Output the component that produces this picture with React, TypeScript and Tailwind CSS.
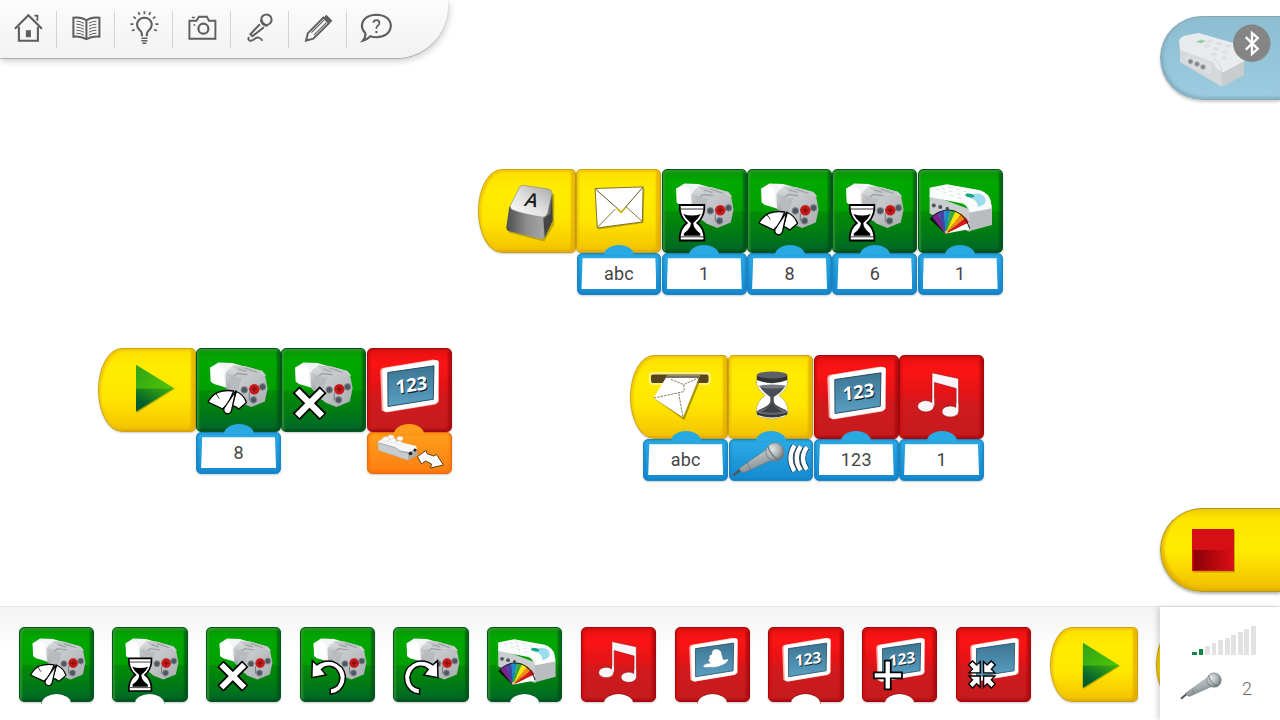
import React from "react";

type Tone = "green" | "red" | "yellow";

const TONES: Record<Tone, string> = {
  green:
    "bg-[linear-gradient(180deg,#0a9508_0%,#00a800_14%,#00a000_50%,#008d06_51%,#007d12_75%,#00652a_100%)] border-[#00581f] shadow-[inset_2px_2px_2px_rgba(60,150,50,.75),inset_-3px_-2px_2px_rgba(0,70,25,.6),0_1px_2px_rgba(0,0,0,.2)]",
  red: "bg-[linear-gradient(180deg,#e81010_0%,#fb1414_18%,#e51316_45%,#d01a1d_58%,#c51b1e_100%)] border-[#a3090c] shadow-[inset_2px_2px_2px_rgba(205,15,15,.9),inset_-3px_-2px_2px_rgba(165,10,14,.75),0_1px_2px_rgba(0,0,0,.2)]",
  yellow:
    "bg-[linear-gradient(180deg,#fde000_0%,#ffec00_25%,#ffe600_60%,#f7cd00_88%,#f0bf00_100%)] border-[#c9a312] shadow-[inset_2px_2px_2px_rgba(240,190,0,.7),inset_-4px_-2px_2px_rgba(225,165,0,.7),0_1px_2px_rgba(0,0,0,.2)]",
};

/* ---------- artwork, drawn in block units (85 x 85) ---------- */

const Defs = () => (
  <svg width="0" height="0" className="absolute">
    <defs>
      <linearGradient id="steel" x1="0" y1="0" x2="0" y2="1">
        <stop offset="0" stopColor="#dcdee0" />
        <stop offset="1" stopColor="#a3a6aa" />
      </linearGradient>
      <linearGradient id="face" x1="0" y1="0" x2="1" y2="1">
        <stop offset="0" stopColor="#cfd1d3" />
        <stop offset="1" stopColor="#a9acb0" />
      </linearGradient>
      <linearGradient id="keySide" x1="0" y1="0" x2="1" y2="0">
        <stop offset="0" stopColor="#4c4c4c" />
        <stop offset=".45" stopColor="#8e8e8e" />
        <stop offset=".8" stopColor="#a4a4a4" />
        <stop offset="1" stopColor="#555" />
      </linearGradient>
      <linearGradient id="keyTop" x1="0" y1="1" x2="1" y2="0">
        <stop offset="0" stopColor="#fff" />
        <stop offset=".5" stopColor="#dedede" />
        <stop offset="1" stopColor="#a5a5a5" />
      </linearGradient>
      <linearGradient id="playTop" x1="0" y1="0" x2="1" y2="1">
        <stop offset="0" stopColor="#2da317" />
        <stop offset="1" stopColor="#5ed000" />
      </linearGradient>
      <linearGradient id="playLow" x1="0" y1="1" x2=".8" y2="0">
        <stop offset="0" stopColor="#00512c" />
        <stop offset=".35" stopColor="#04652c" />
        <stop offset="1" stopColor="#38a810" />
      </linearGradient>
      <linearGradient id="glass" x1="0" y1="0" x2="0" y2="1">
        <stop offset="0" stopColor="#3c7592" />
        <stop offset="1" stopColor="#5a9fc2" />
      </linearGradient>
      <linearGradient id="stopLow" x1="0" y1="0" x2="1" y2="0">
        <stop offset="0" stopColor="#8a0008" />
        <stop offset="1" stopColor="#d90f13" />
      </linearGradient>
      <radialGradient id="ball" cx=".35" cy=".35" r=".75">
        <stop offset="0" stopColor="#e4e8ea" />
        <stop offset=".55" stopColor="#a9afb2" />
        <stop offset="1" stopColor="#5d6468" />
      </radialGradient>
      <linearGradient id="handle" x1="0" y1="0" x2=".5" y2="1">
        <stop offset="0" stopColor="#dfe3e5" />
        <stop offset="1" stopColor="#7d868b" />
      </linearGradient>
    </defs>
  </svg>
);

const Motor = () => (
  <g>
    <path d="M14 19 L22 14 L36 14.5 L48 18 L42 43 L18 35.5 L14.5 33Z" fill="#f3f4f5" />
    <path d="M14 19 L22 16.5 L27 20 L28 37 L18 35.5 L14.5 33Z" fill="#fff" />
    <path d="M30 24 L33 20 M32 26 L35 21.500" stroke="#d3d5d8" strokeWidth="1" />
    <path d="M29 25 L36 17 L48 17.5 L66 22.5 L70 27 L45 33 L34 44 L30 40Z" fill="url(#steel)" />
    <path d="M36 17 L48 17.500 L66 22.500 L63 25 L43 24Z" fill="#c5c8cb" />
    <path d="M42 20.500 L50 23 M48 19.500 L56 22 M54 21.500 L61 24 M37 28 L41 25 L58 27" stroke="#9da0a4" strokeWidth="1.300" fill="none" />
    <path d="M29 25 Q36 28 34 44 L41 52 L46 30Z" fill="#b9bcbf" />
    <path d="M45 31 L52 25.5 L64 25 L69 28 L71.3 40 L68.5 53 L55 58.5 L44 54 L39.7 50Z" fill="url(#face)" />
    <path d="M53 44 V52" stroke="#6d7074" strokeWidth=".9" />
    <g fill="#4d5862" stroke="#8b8e92" strokeWidth="1">
      <circle cx="48" cy="41.4" r="3.3" />
      <circle cx="66.3" cy="38.4" r="3.3" />
      <circle cx="57.3" cy="51.4" r="3.3" />
    </g>
    <circle cx="58" cy="40.7" r="5.200" fill="#c91a1a" />
    <path d="M58 38 V43.400 M55.300 40.700 H60.700" stroke="#8f1012" strokeWidth="1.800" />
  </g>
);

const Glass = () => (
  <g>
    <path
      d="M17.500 35.500 H42 V40 Q41 48 35 53.500 Q41 58 42 66.500 V71 H17.500 V66.500 Q18.500 58 24.500 53.500 Q18.500 48 17.500 40Z"
      fill="#fff" stroke="#000" strokeWidth="1.8"
    />
    <path d="M21 44.500 Q30 47.500 38.500 44.500 Q36 49.500 31 53.500 Q31 59 38 64 V66.300 H21.500 V64 Q28.500 59 28.700 53.500 Q23.500 49.500 21 44.500Z" fill="#000" />
    <path d="M18 39.500 H41.500 M18 67.300 H41.500" stroke="#000" strokeWidth=".8" />
  </g>
);

const Gauge = () => (
  <g stroke="#000" strokeWidth="1.300" strokeLinejoin="round" fill="#fff">
    <path d="M11.700 53.500 Q16 46 21.500 43.800 Q29 41 37.500 42.500 L31 56.500 Q27.500 58 26.500 60.500 Z" />
    <path d="M40 43 Q47.500 46 50.200 54 L42.500 60.500 Q39 57.500 35.800 57Z" />
    <path d="M39.500 42.500 L35.700 60 Q35 65 31.500 65.300 Q27 65 27.500 60Z" />
    <path d="M19.500 44.800 L23 50" strokeWidth=".8" />
  </g>
);

const Cross = () => (
  <g fill="none" strokeLinecap="butt">
    <path d="M14.800 41.300 L41.800 68.300 M41.800 41.300 L14.800 68.300" stroke="#000" strokeWidth="9.800" />
    <path d="M15.900 42.400 L40.700 67.200 M40.700 42.400 L15.900 67.200" stroke="#fff" strokeWidth="6.200" />
  </g>
);

const TurnArrow = ({ flip }: { flip?: boolean }) => (
  <g transform={flip ? "translate(60 0) scale(-1 1)" : undefined}>
    <path
      d="M12.500 38 L17.500 42.500 Q26 36.500 35 39 Q47 43 48.500 55 Q48.500 68 38 73 L32 74.500 V68.500 Q42 67 42.500 56.500 Q41 45.500 32 44 Q26.500 43.500 22.500 47.500 L27.500 53.500 L12 56.500Z"
      fill="#fff" stroke="#000" strokeWidth="1.600" strokeLinejoin="miter"
    />
  </g>
);

const Sensor = () => (
  <g>
    <path d="M11.300 25 L52 40 V62 L49.700 61.700 L11.300 44Z" fill="#cbced0" />
    <path d="M51 40 L73.700 35 V55.500 L50.500 61.700Z" fill="#babdc0" />
    <path d="M11.300 18.300 L28.700 14.700 L62 20.700 Q71 24 72.700 32 L73 39 L51.500 43 Q49 36 44 34 L11.300 27.500Z" fill="#fbfcfc" />
    <path d="M43 32 Q50 35 51.500 43" stroke="#dfe2e4" fill="none" />
    <path d="M51 28 Q54 23.500 60 24 Q66.500 25 67.500 31 Q67 36 59.500 37.500 Q60 31 51 28Z" fill="#9cdcef" />
    <ellipse cx="51.500" cy="26" rx="4.500" ry="1.900" fill="#14a583" transform="rotate(10 51.500 26)" />
    <g fill="none" stroke="#dadddf" strokeWidth="1.100">
      <path d="M18 19.500 l3 1 M24 18.500 l3 1 M30 17.500 l3 1 M25 22.500 l3 1 M31 21.500 l3 1 M38 19.500 l3 1 M32 25.500 l3 1 M39 24 l3 1 M45 21.500 l3 1 M40 28 l3 1" />
    </g>
    <g fill="#4c5359"><circle cx="15.500" cy="36" r="2" /><circle cx="22" cy="37.500" r="2" /><circle cx="29" cy="39" r="1.700" /></g>
    <g>
      <path d="M27 64.500 L11.500 49.500 L16 45.500Z" fill="#111" />
      <path d="M27 64.500 L13.500 47 L20 42.500Z" fill="#7a2590" />
      <path d="M27 64.500 L20 42.500 L26 40.800Z" fill="#3e46a8" />
      <path d="M27 64.500 L26 40.800 L32 40.500Z" fill="#1889c9" />
      <path d="M27 64.500 L32 40.500 L37.500 41.500Z" fill="#39ab3c" />
      <path d="M27 64.500 L37.500 41.500 L43 44Z" fill="#ffe500" />
      <path d="M27 64.500 L43 44 L47.500 48Z" fill="#f08a12" />
      <path d="M27 64.500 L47.500 48 L50.700 53Z" fill="#da1717" />
      <path d="M27 64.500 L50.700 53 L51.500 59.500 L28 64Z" fill="#fff" />
      <path d="M11.500 49.500 Q18 42 28 40.500 Q45 40 51.500 59" fill="none" stroke="#222" strokeWidth="1.100" />
      <circle cx="28" cy="62.500" r="1.600" fill="#f4b27c" />
    </g>
  </g>
);

const Screen = ({ kind }: { kind: "123" | "hat" | "blank" }) => (
  <g>
    <path d="M13 23 Q13 20 16 19.300 L66 11 L71 13 L71.500 53 L68 56 L19 64 L14.500 62Z" fill="#ffb4b0" />
    <path d="M15 23 Q15 20.300 18 19.600 L68 11.500 Q71.500 11.200 71.500 14 L70.700 52 Q70.700 54.600 68 55.200 L20 63.300 Q16.300 63.500 16.200 60.500Z" fill="#fff" />
    <path d="M20.500 24 L66.700 17.300 L66 50.800 L20.700 58Z" fill="url(#glass)" stroke="#1c445b" strokeWidth=".9" />
    {kind === "123" && (
      <g transform="translate(44.500 43) rotate(-3) skewY(-5)" fontFamily="'Open Sans', 'Liberation Sans', sans-serif" fontWeight="700" fontSize="18.500" textAnchor="middle">
        <text x="1" y="1.400" fill="#12242f">123</text>
        <text fill="#fff">123</text>
      </g>
    )}
    {kind === "hat" && (
      <path d="M29.500 45.500 Q31 42 38.500 41.500 Q34 38.500 37.500 35.500 Q36 31.500 40 31 Q40 24.500 46 24.500 Q52 25 52.500 31.500 L54 37 Q58 37.500 60.500 35.500 Q60 41.500 52 44.500 Q46 47.500 39 46.500 Q31.500 48 29.500 45.500Z" fill="#fff" stroke="#2b5c76" strokeWidth=".5" />
    )}
  </g>
);

/* Palette versions of the screen blocks use a smaller screen. */
const SmallScreen = ({ kind }: { kind: "123" | "hat" | "blank" }) => (
  <g transform="translate(2.900 3.300) scale(.9)"><Screen kind={kind} /></g>
);

const Plus = () => (
  <path d="M23.800 38 h6.600 v12.800 h12.200 v6.400 h-12.200 v12 h-6.600 v-12 h-11.800 v-6.400 h11.800z" fill="#fff" stroke="#000" strokeWidth="1.900" />
);

const Shrink = () => (
  <g fill="#fff" stroke="#000" strokeWidth="1.500">
    {["", "translate(54.600 0) scale(-1 1)", "translate(0 106) scale(1 -1)", "translate(54.600 106) scale(-1 -1)"].map((t) => (
      <path key={t} transform={t || undefined} d="M12.800 42.500 L17.200 38.300 L21.600 42.800 L25.500 39 V51.300 H13.200 L17 47.200Z" />
    ))}
  </g>
);

const Music = () => (
  <g fill="#fbf4f8" stroke="#8d0d10" strokeWidth=".6">
    <path d="M32.700 17.300 L59.300 23 V56 H56.800 V33 L35.200 27 V51 H32.700Z" />
    <ellipse cx="26.500" cy="50.800" rx="8.200" ry="5.700" />
    <ellipse cx="51" cy="56" rx="8.400" ry="5.600" />
    <path d="M32.900 49 V44 H35 V50Z M57 55 V48 H59 V56Z" stroke="none" />
  </g>
);

const Play = () => (
  <g>
    <path d="M38.500 17.500 L76.500 40.300 L38.500 64.500Z" fill="#7f7d00" opacity=".6" />
    <path d="M37.700 16.300 L75.400 39.600 L37.700 63Z" fill="url(#playTop)" />
    <path d="M37.700 40 H75 L37.700 63Z" fill="url(#playLow)" />
  </g>
);

const Key = () => (
  <g>
    <path d="M34 40 L30 63 L66 72 L76 55 L76 24Z" fill="#8c7a00" opacity=".5" />
    <path d="M31 37 L28 58 Q28 61 31 61.800 L62 69.500 Q65.500 70 67 67 L73.500 52 V24 L66 48Z" fill="url(#keySide)" />
    <path d="M72 44 L74 23 L74.500 51 L66.500 68 L65 49Z" fill="#454545" />
    <path d="M40.500 19 Q42 15.300 46 16 L70 19.500 Q74.500 20.500 73.500 25 L69.500 43 Q68 48 63 47.500 Q45 44.500 34.500 40.500 Q31 39 32.500 35Z" fill="url(#keyTop)" stroke="#777" strokeWidth=".5" />
    <text transform="translate(51.500 37) rotate(7) skewX(-12)" fontFamily="'Open Sans', 'Liberation Sans', sans-serif" fontWeight="600" fontSize="19" textAnchor="middle" fill="#1a1a1a">A</text>
  </g>
);

const Envelope = () => (
  <g strokeLinejoin="round">
    <path d="M20 21 L68 19 L67.300 53.500 L22 60Z" fill="#9b8500" opacity=".6" />
    <path d="M18.800 19 L66.800 17.400 L66 52.400 L21 58.400Z" fill="#fff" stroke="#77651c" strokeWidth=".9" />
    <path d="M21 58 L39 39.500 M66 52 L49.500 37" stroke="#77651c" strokeWidth=".9" />
    <path d="M19 19.300 L45 42.500 L66.500 17.800" fill="none" stroke="#65551c" strokeWidth="1" />
    <path d="M40.500 39 L45 42.800 L49 38.500" fill="none" stroke="#cdb500" strokeWidth="1.600" />
  </g>
);

const Inbox = () => (
  <g>
    <rect x="18.500" y="16.500" width="62" height="13" rx="4" fill="#fff17a" />
    <rect x="20.700" y="19" width="57.500" height="8.500" rx="2" fill="#57461b" />
    <path d="M38 24 L70 25 L54 64.500 L25 44Z" fill="#7e6b00" opacity=".65" />
    <path d="M37 20 L69.500 20 L52.700 61.800 L23.300 42.500Z" fill="#fff" />
    <path d="M37 20 L69.500 20 L68.500 22.500 H35Z" fill="#76705e" />
    <path d="M23.500 42.500 L54 36 M40.500 24 L53.500 29 L54 36 M69 22 L53.500 29 M48.500 38 L52.500 61" fill="none" stroke="#777043" strokeWidth=".9" strokeDasharray="2.500 1" />
  </g>
);

const Timer = () => (
  <g>
    <path d="M28 24 H59.500 Q60 33 50.500 40 Q60 46 59.500 57 L56 61.500 L43.500 63.500 L31 61.500 L28 57 Q27.500 46 37 40 Q27.500 33 28 24Z" fill="#fff" stroke="#aa9d4e" strokeWidth=".6" />
    <path d="M31 30 Q43.500 34.500 57 30 Q54 36.500 45.500 41.500 V46 Q46 50 57 54 L58 57 H30 L31 54 Q41.500 50 42 46 V41.500 Q34 36.500 31 30Z" fill="#4b4e54" />
    <ellipse cx="44" cy="31" rx="13" ry="2" fill="#777b82" />
    <path d="M28.500 19.500 V24.500 Q44 31 59 24.500 V19.500Z" fill="#303236" />
    <ellipse cx="43.800" cy="19.500" rx="15.200" ry="3.500" fill="#5c6066" />
    <path d="M28.500 56 V59 Q44 65 59 59 V56Z" fill="#35383c" />
    <ellipse cx="43.800" cy="56" rx="15.200" ry="3.200" fill="#65696f" />
    <path d="M43.900 47 Q45 52 54 56 Q44 58.500 33 56 Q43 52 43.900 47Z" fill="#3e4146" />
  </g>
);

const Mic = () => (
  <g>
    <path d="M5 36 L12 30" stroke="#4b5962" strokeWidth="2.600" strokeLinecap="round" />
    <path d="M10 29.500 L37 10.500 L44 20.500 L15.500 33.500 Q11.500 33.500 10 29.500Z" fill="url(#handle)" stroke="#69757c" strokeWidth=".7" />
    <path d="M18.500 24 L21.500 30.800" stroke="#69757c" strokeWidth=".7" />
    <circle cx="46" cy="13" r="9.200" fill="url(#ball)" stroke="#6f787d" strokeWidth=".6" />
    <path d="M39 7.500 Q41 16 50 21.200" fill="none" stroke="#6d767b" strokeWidth="1.100" />
  </g>
);

const Waves = () => (
  <g fill="none">
    {[0, 6.2, 12.4].map((dx, i) => {
      const inset = i * 0.8;
      const d = `M${65.5 + dx} ${6.5 + inset} Q${57.5 + dx} 19.500 ${65.5 + dx} ${32 - inset}`;
      return (
        <g key={dx}>
          <path d={d} stroke="#1b3446" strokeWidth="5.800" />
          <path d={d} stroke="#fff" strokeWidth="4.300" />
        </g>
      );
    })}
  </g>
);

const TiltBrick = () => (
  <g strokeLinejoin="round">
    <path d="M10.600 10 L16.600 6 L49 14 L50.500 23 L41 28.500 L11.500 18.500Z" fill="#a9abad" />
    <path d="M10.600 10 L16.600 6 L49 14 L50 17 L42 20 L33 18.500 L28 15Z" fill="#f7f8f9" />
    <path d="M11 11 L28 16 L33 20 L41 21.500 L41 28 L11.500 18Z" fill="#c9cbcd" />
    <g fill="#fff" stroke="#cfd1d3" strokeWidth=".6">
      <ellipse cx="19" cy="7" rx="3.200" ry="2.200" /><ellipse cx="26" cy="8.500" rx="3.200" ry="2.200" />
      <ellipse cx="24" cy="5" rx="3" ry="2" /><ellipse cx="33" cy="6.500" rx="3" ry="2" /><ellipse cx="32" cy="11" rx="3" ry="2" />
    </g>
    <circle cx="43.500" cy="21.500" r="1.800" fill="#222" /><circle cx="48" cy="18" r="1.600" fill="#222" />
    <path d="M50.500 24.500 L59 18.500 L60 21.500 L66.500 24 L69.500 22.500 L76.500 33 L63.500 36 L64.500 32 L58.500 29 L54.500 32Z" fill="#fff" stroke="#5b3d12" strokeWidth="1" />
  </g>
);

const ICONS: Record<string, React.ReactNode> = {
  motor_speed: <><Motor /><Gauge /></>,
  motor_time: <><Motor /><Glass /></>,
  motor_off: <><Motor /><Cross /></>,
  motor_left: <><Motor /><TurnArrow /></>,
  motor_right: <><Motor /><TurnArrow flip /></>,
  light: <Sensor />,
  number: <Screen kind="123" />,
  number_small: <SmallScreen kind="123" />,
  picture: <SmallScreen kind="hat" />,
  add: <><SmallScreen kind="123" /><Plus /></>,
  shrink: <><SmallScreen kind="blank" /><Shrink /></>,
  music: <Music />,
  play: <Play />,
  key: <Key />,
  mail: <Envelope />,
  inbox: <Inbox />,
  wait: <Timer />,
};

/* ---------- canvas programs ---------- */

type Param = { kind: "text"; value: string } | { kind: "mic" } | { kind: "tilt" };

const ParamBox = ({ param }: { param: Param }) => {
  const orange = param.kind === "tilt";
  const skin = orange
    ? "bg-[linear-gradient(180deg,#ffa01c,#fb7d10)] border-[#ea6c0c] shadow-[inset_0_0_3px_1px_rgba(240,100,5,.6),0_1px_2px_rgba(0,0,0,.2)]"
    : "bg-[linear-gradient(180deg,#2babe6,#1489d0)] border-[#1c86c4] shadow-[inset_0_0_2px_1px_rgba(20,120,185,.5),0_1px_2px_rgba(0,0,0,.2)]";
  return (
    <div className={`relative flex h-[41.500px] w-[84.800px] items-center justify-center rounded-[5px] border ${skin}`}>
      <div className={`absolute -top-[9px] left-[26.500px] h-[10px] w-[30px] rounded-t-[15px_10px] ${orange ? "bg-[#ff9b1a]" : "bg-[#29a9e2]"}`} />
      {param.kind === "text" ? (
        <div className="flex h-[31px] w-[75px] items-center justify-center bg-white text-[18px] leading-none tracking-[.2px] text-[#454545] [clip-path:polygon(1.5%_0,98.5%_0,100%_100%,0_100%)]">
          {param.value}
        </div>
      ) : (
        <svg className="absolute -left-px -top-px overflow-visible" width="85" height="41" viewBox="0 0 85 41">
          {param.kind === "mic" ? <><Mic /><Waves /></> : <TiltBrick />}
        </svg>
      )}
    </div>
  );
};

type Block = { tone: Tone; icon: string; start?: boolean; param?: Param };

const CanvasBlock = ({ tone, icon, start, param }: Block) => (
  <div className={`flex shrink-0 flex-col items-end ${start ? "w-[98.100px]" : "w-[85.300px]"}`}>
    <div className={`h-[84px] border ${start ? "w-[98px] rounded-[5px] rounded-l-[24px_42px]" : "w-[85px] rounded-[5px]"} ${TONES[tone]}`}>
      <svg className="-ml-px -mt-px overflow-visible" width="85" height="85" viewBox="-.3 -.5 85 85">{ICONS[icon]}</svg>
    </div>
    {param && <ParamBox param={param} />}
  </div>
);

const Program = ({ blocks, place }: { blocks: Block[]; place: string }) => (
  <div className={`absolute flex items-start ${place}`}>
    {blocks.map((b, i) => <CanvasBlock key={i} {...b} />)}
  </div>
);

const text = (value: string): Param => ({ kind: "text", value });

const KEY_PROGRAM: Block[] = [
  { tone: "yellow", icon: "key", start: true },
  { tone: "yellow", icon: "mail", param: text("abc") },
  { tone: "green", icon: "motor_time", param: text("1") },
  { tone: "green", icon: "motor_speed", param: text("8") },
  { tone: "green", icon: "motor_time", param: text("6") },
  { tone: "green", icon: "light", param: text("1") },
];
const PLAY_PROGRAM: Block[] = [
  { tone: "yellow", icon: "play", start: true },
  { tone: "green", icon: "motor_speed", param: text("8") },
  { tone: "green", icon: "motor_off" },
  { tone: "red", icon: "number", param: { kind: "tilt" } },
];
const MAIL_PROGRAM: Block[] = [
  { tone: "yellow", icon: "inbox", start: true, param: text("abc") },
  { tone: "yellow", icon: "wait", param: { kind: "mic" } },
  { tone: "red", icon: "number", param: text("123") },
  { tone: "red", icon: "music", param: text("1") },
];

/* ---------- toolbar ---------- */

const TOOLS: React.ReactNode[] = [
  <g key="home">
    <path d="M1.500 15.500 L15 2 L28.500 15.500" strokeWidth="2.100" />
    <path d="M5.500 13.500 V27.500 H24.500 V13.500" strokeWidth="2.100" />
    <path d="M21 2.500 H24 V7.500" strokeWidth="1.800" />
    <path d="M12.500 17 H17.500 V24 H12.500Z" fill="#5e5e5e" stroke="none" />
  </g>,
  <g key="book">
    <path d="M15 7 Q10 3.500 2 4.500 V23.500 Q9 22.500 15 26 Q21 22.500 28 23.500 V4.500 Q20 3.500 15 7Z M15 7 V26" strokeWidth="2" />
    <path d="M5 8 Q9 8 12.500 10 M5 11 Q9 11 12.500 13 M5 14 Q9 14 12.500 16 M5 17 Q9 17 12.500 19 M5 20 Q9 20 12.500 22 M25 8 Q21 8 17.500 10 M25 11 Q21 11 17.500 13 M25 14 Q21 14 17.500 16 M25 17 Q21 17 17.500 19 M25 20 Q21 20 17.500 22" strokeWidth="1" />
  </g>,
  <g key="bulb">
    <path d="M12.500 23 V20.500 Q12.500 18.500 9.500 16 Q6.500 12 8.300 8.500 Q10.500 4.500 15 4.500 Q19.500 4.500 21.700 8.500 Q23.500 12 20.500 16 Q17.500 18.500 17.500 20.500 V23" strokeWidth="2.100" />
    <path d="M12 25 H18 M12 27.500 H18 M13 30 H17" strokeWidth="1.600" />
    <path d="M15 -2 V1 M9 -1 L10.300 1.700 M21 -1 L19.700 1.700 M4 3.500 L6.500 5.500 M26 3.500 L23.500 5.500 M1 11 H4 M29 11 H26 M2.500 17.500 L5.200 16.300 M27.500 17.500 L24.800 16.300" strokeWidth="1.700" />
  </g>,
  <g key="camera">
    <path d="M2 7.500 H9 L11.500 3.500 H19.500 L21.500 7.500 H28 V25.500 H2Z" strokeWidth="1.900" />
    <path d="M4.500 4.300 H7.500 M7 11 V12.500" strokeWidth="1.700" />
    <circle cx="16" cy="15.500" r="5" strokeWidth="2.200" />
  </g>,
  <g key="voice">
    <circle cx="21" cy="6.500" r="5.200" strokeWidth="2" />
    <path d="M15.800 6.500 Q17 12 22 12.500" strokeWidth="2.600" />
    <path d="M14.500 11 L5 21 L7 23 L18.500 14" strokeWidth="2" />
    <path d="M4 24 Q1.500 25.500 4.500 27.500 Q7 28 9.500 25.500 Q13.500 22.500 17 27.500" strokeWidth="1.900" />
  </g>,
  <g key="pencil">
    <path d="M2.500 27.500 L4.500 20 L20 4.500 L25.500 10 L10 25.500Z" strokeWidth="1.900" />
    <path d="M20.500 4 L23 1.500 L29 7.500 L26.500 10Z" fill="#5e5e5e" stroke="none" />
    <path d="M8 19.500 L20.500 7 M10.500 22 L23 9.500" strokeWidth="1.200" />
    <path d="M2 28 L3 24.500 L5.500 27Z" fill="#5e5e5e" stroke="none" />
  </g>,
  <g key="help">
    <path d="M4 20 Q.500 16.500 .500 12.500 Q1.500 2 15 1.500 Q28.500 2 29.500 12.500 Q28.500 23.500 15 24 Q11.500 24 9 23 Q5.500 26.500 1.500 27.500 Q4.500 24 4 20Z" strokeWidth="2.100" />
    <path d="M12 9.500 Q12.300 7 15 7 Q18 7 18 9.700 Q18 11.500 16 12.700 Q15 13.500 15 15.500" strokeWidth="1.800" />
    <path d="M15 17.800 V20" strokeWidth="2" />
  </g>,
];

const Toolbar = () => (
  <header className="absolute left-0 top-0 flex h-[58px] w-[448px] items-center rounded-br-[52px] bg-linear-to-b from-[#fcfcfc] to-[#f2f2f2] shadow-[0_1px_1px_rgba(0,0,0,.22),1px_3px_7px_rgba(0,0,0,.2)]">
    {TOOLS.map((tool, i) => (
      <button key={i} className={`flex h-[37px] items-center justify-center ${i === 0 ? "w-[56px]" : "w-[58px] border-l border-[#d4d4d4]"}`}>
        <svg className="mb-[2px] overflow-visible" width="30" height="30" viewBox="-.4 -.2 30 30" fill="none" stroke="#5e5e5e">{tool}</svg>
      </button>
    ))}
  </header>
);

/* ---------- side controls ---------- */

const HubButton = () => (
  <div className="absolute right-0 top-[16px] h-[84px] w-[120px] rounded-l-[42px] border border-r-0 border-[#8ba7b3] bg-linear-to-b from-[#8cbdd0] to-[#9dcce0] shadow-[0_2px_3px_rgba(0,0,0,.2),inset_2px_-2px_3px_rgba(120,165,185,.7)]">
    <svg width="119" height="82" viewBox="1161 17 119 82">
      <path d="M1180 39 L1212 54 L1222 65 V87 L1180 62Z" fill="#d6d9db" />
      <path d="M1220 64 L1244 58 V75 L1222 87Z" fill="#c9cdd0" />
      <path d="M1179 41 Q1180 37 1185 35.500 L1199 33 L1240 45 Q1246 48 1246 60 L1223 72.500 L1216 68 L1213 62 L1180 50Z" fill="#e9ecee" />
      <path d="M1213 58 Q1220 62 1222 72" fill="none" stroke="#d5d9dc" />
      <path d="M1196 42 L1201 39.500 L1206 41 L1201 43.500Z" fill="#9ccfa6" />
      <g fill="#dde1e3">
        <ellipse cx="1210" cy="41" rx="3" ry="1.700" /><ellipse cx="1219" cy="43.500" rx="3" ry="1.700" /><ellipse cx="1228" cy="46" rx="3" ry="1.700" />
        <ellipse cx="1207" cy="46" rx="3" ry="1.700" /><ellipse cx="1216" cy="49" rx="3" ry="1.700" /><ellipse cx="1225" cy="52" rx="3" ry="1.700" />
        <ellipse cx="1214" cy="54" rx="3" ry="1.700" /><ellipse cx="1224" cy="58" rx="3" ry="1.700" />
      </g>
      <path d="M1185 55 L1211 63 V75 L1186 64Z" fill="#dcdfe1" />
      <g fill="#83878b" stroke="#b9bdc0"><circle cx="1190.500" cy="61.500" r="2.500" /><circle cx="1197" cy="64" r="2.500" /><circle cx="1203" cy="67" r="2.500" /></g>
      <circle cx="1251.800" cy="43.300" r="18.700" fill="#858585" />
      <path d="M1245.800 37.200 L1257.800 48.800 L1252 54 V33 L1257.800 38 L1245.800 49.600" fill="none" stroke="#fff" strokeWidth="2.300" />
    </svg>
  </div>
);

const StopButton = () => (
  <div className="absolute right-0 top-[508px] flex h-[84px] w-[120px] items-center rounded-l-[42px] border border-r-0 border-[#a89928] bg-[linear-gradient(180deg,#efca00_0%,#ffe500_12%,#ffec00_50%,#fbd700_72%,#edbb00_100%)] pl-[31px] shadow-[0_2px_3px_rgba(0,0,0,.3),inset_3px_-2px_3px_rgba(225,170,0,.8)]">
    <svg className="overflow-visible" width="42" height="42" viewBox="0 0 42 42">
      <rect x="1" y="1.500" width="42" height="42" fill="#806000" opacity=".45" />
      <rect width="42" height="42" fill="#d60f14" />
      <rect x="1.500" y="21" width="39" height="20" fill="url(#stopLow)" />
    </svg>
  </div>
);

/* ---------- palette ---------- */

type Tile = { tone: Tone; icon: string; notch?: boolean; start?: boolean };

const TILES: Tile[] = [
  { tone: "green", icon: "motor_speed", notch: true },
  { tone: "green", icon: "motor_time", notch: true },
  { tone: "green", icon: "motor_off" },
  { tone: "green", icon: "motor_left" },
  { tone: "green", icon: "motor_right" },
  { tone: "green", icon: "light", notch: true },
  { tone: "red", icon: "music", notch: true },
  { tone: "red", icon: "picture", notch: true },
  { tone: "red", icon: "number_small", notch: true },
  { tone: "red", icon: "add", notch: true },
  { tone: "red", icon: "shrink" },
  { tone: "yellow", icon: "play", start: true },
  { tone: "yellow", icon: "play", start: true },
];

const PaletteTile = ({ tone, icon, notch, start }: Tile) => {
  const edge = tone === "red" ? "border-[#a3151a]" : "border-[#00602a]";
  return (
    <div className="relative h-[75px] shrink-0">
      <div className={`h-[75px] border ${start ? "w-[88px] rounded-[5px] rounded-l-[22px_37.5px]" : "w-[75.300px] rounded-[5px]"} ${TONES[tone]}`}>
        <svg className="-ml-px -mt-px" width="85" height="75" viewBox="0 0 85 75">
          <g transform={start ? "translate(-3.300 .200) scale(.96)" : "translate(.800 -1.300) scale(.92)"}>{ICONS[icon]}</g>
        </svg>
      </div>
      {notch && <div className={`absolute -bottom-[2px] left-[22px] h-[11px] w-[31px] rounded-t-[15.5px_10px] border-t border-x bg-[#fefefe] ${edge} [clip-path:inset(0_1px_0_1px)]`} />}
    </div>
  );
};

const LEVELS = [0, 1, 2, 3, 4, 5, 6, 7, 8, 9];

const SoundLevel = () => (
  <aside className="relative flex w-[120px] flex-col bg-white pl-[20px] pt-[19px] shadow-[-3px_0_5px_rgba(0,0,0,.14)]">
    <div className="ml-[12px] flex h-[28.500px] items-end gap-[1.750px]">
      {LEVELS.map((n) => (
        <div key={n} className={`w-[4.800px] ${n < 2 ? "bg-[#0a8746]" : "bg-[#e2e2e2]"}`} style={{ height: 2.7 + n * 2.85 }} />
      ))}
    </div>
    <div className="mt-[18px] flex items-center gap-[20px]">
      <svg className="overflow-visible" width="42" height="30" viewBox="3 4 53 38"><Mic /></svg>
      <span className="pt-[2px] text-[18px] font-light leading-none text-[#666]">2</span>
    </div>
  </aside>
);

export default function App() {
  return (
    <div className="relative flex h-[720px] w-[1280px] flex-col overflow-hidden bg-white font-['Roboto','Liberation_Sans',sans-serif]">
      <Defs />
      <main className="relative flex-1">
        <Toolbar />
        <HubButton />
        <Program blocks={KEY_PROGRAM} place="left-[478px] top-[169px]" />
        <Program blocks={PLAY_PROGRAM} place="left-[97.600px] top-[348px]" />
        <Program blocks={MAIL_PROGRAM} place="left-[630px] top-[355px]" />
        <StopButton />
      </main>
      <footer className="flex h-[114px] border-t border-[#e6e6e6] bg-linear-to-b from-[#f4f4f4] to-white to-40%">
        <div className="flex w-[1160px] gap-[18.450px] overflow-hidden pl-[18.500px] pt-[20px]">
          {TILES.map((t, i) => <PaletteTile key={i} {...t} />)}
        </div>
        <SoundLevel />
      </footer>
    </div>
  );
}
